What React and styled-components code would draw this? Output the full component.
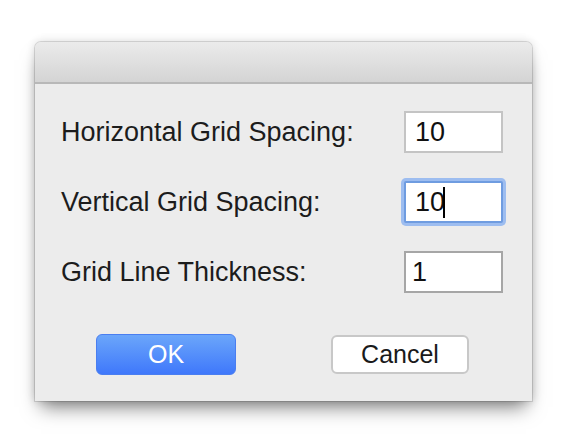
import React from "react";
import styled, { createGlobalStyle } from "styled-components";

const Global = createGlobalStyle`
  html, body {
    margin: 0;
    background: #ffffff;
  }
  body {
    font-family: "Liberation Sans", Arial, sans-serif;
  }
`;

const Desktop = styled.div`
  width: 568px;
  height: 444px;
  box-sizing: border-box;
  padding: 42px 36px 0 35px;
`;

const Window = styled.div`
  width: 497px;
  height: 359px;
  background: #ececec;
  border-radius: 6px 6px 0 0;
  box-shadow: 0 12px 18px -6px rgba(0, 0, 0, 0.5), 0 0 10px rgba(0, 0, 0, 0.16),
    0 0 0 1px rgba(0, 0, 0, 0.12);
  display: flex;
  flex-direction: column;
  overflow: hidden;
`;

const TitleBar = styled.div`
  height: 40px;
  flex: none;
  background: linear-gradient(#ebebeb, #d4d4d4);
  border-bottom: 2px solid #b8b8b8;
`;

const Body = styled.div`
  display: flex;
  flex-direction: column;
  padding: 27px 29px 0 26px;
`;

const Fields = styled.div`
  display: flex;
  flex-direction: column;
  gap: 28px;
`;

const Row = styled.div`
  display: flex;
  align-items: center;
  justify-content: space-between;
  height: 42px;
`;

const Label = styled.span`
  font-size: 27px;
  color: #1c1c1c;
`;

const Field = styled.div`
  width: 99px;
  height: 42px;
  box-sizing: border-box;
  background: #fff;
  border: 2px solid ${(p) => (p.$focused ? "#6f9ce0" : p.$dark ? "#a6a6a6" : "#c4c4c4")};
  box-shadow: ${(p) => (p.$focused ? "0 0 0 3px #9dbdf0" : "none")};
  border-radius: ${(p) => (p.$focused ? "2px" : "0")};
  display: flex;
  align-items: center;
  padding-left: ${(p) => (p.$dark ? "6px" : "9px")};
  font-size: 27px;
  color: #111;
`;

const Caret = styled.span`
  display: inline-block;
  width: 2px;
  height: 31px;
  background: #000;
  margin-left: -2px;
`;

const Buttons = styled.div`
  display: flex;
  justify-content: space-between;
  align-items: center;
  margin-top: 41px;
  padding: 0 34px 0 35px;
`;

const Button = styled.button`
  box-sizing: border-box;
  width: ${(p) => (p.$primary ? "140px" : "138px")};
  height: ${(p) => (p.$primary ? "41px" : "39px")};
  border-radius: 6px;
  font-family: "Liberation Sans", Arial, sans-serif;
  font-size: 25px;
  padding: 0;
  border: ${(p) => (p.$primary ? "1px solid #4a7ef0" : "2px solid #c8c8c8")};
  background: ${(p) =>
    p.$primary ? "linear-gradient(#6ba6fa, #3f78fb)" : "#ffffff"};
  color: ${(p) => (p.$primary ? "#ffffff" : "#1a1a1a")};
`;

export default function App() {
  return (
    <Desktop>
      <Global />
      <Window>
        <TitleBar />
        <Body>
          <Fields>
            <Row>
              <Label>Horizontal Grid Spacing:</Label>
              <Field>10</Field>
            </Row>
            <Row>
              <Label>Vertical Grid Spacing:</Label>
              <Field $focused>
                10
                <Caret />
              </Field>
            </Row>
            <Row>
              <Label>Grid Line Thickness:</Label>
              <Field $dark>1</Field>
            </Row>
          </Fields>
          <Buttons>
            <Button $primary>OK</Button>
            <Button>Cancel</Button>
          </Buttons>
        </Body>
      </Window>
    </Desktop>
  );
}
